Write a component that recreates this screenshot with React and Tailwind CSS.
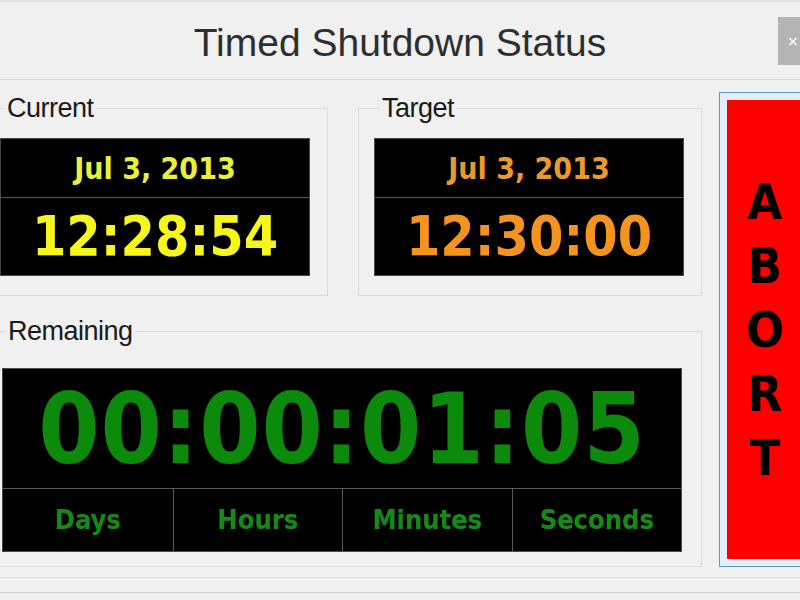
import React from 'react';

const digitFont = "font-['DejaVu_Sans_Condensed','DejaVu_Sans',sans-serif] font-bold";
const uiFont = "font-['Liberation_Sans','Arial',sans-serif]";

const units = ['Days', 'Hours', 'Minutes', 'Seconds'];

// Windows style group box with a caption sitting on the top edge
const GroupBox = ({ label, className, legendClass = 'ml-[5px]', children }) => (
    <fieldset className={`border border-[#d9d9d9] ${className}`}>
        <legend className={`${uiFont} ${legendClass} px-[2px] text-[27px] leading-[28px] tracking-[-0.5px] text-[#1a1a1a]`}>
            {label}
        </legend>
        {children}
    </fieldset>
);

// Black date + clock panel
const ClockPanel = ({ date, time, dateColor, timeColor }) => (
    <div className="w-[310px] h-[138px] bg-black border border-[#4a4a4a] flex flex-col">
        <div className={`${digitFont} h-[58px] flex items-center justify-center text-[30px] ${dateColor}`}>
            {date}
        </div>
        <div className={`${digitFont} flex-1 border-t border-[#5a5a5a] flex items-center justify-center text-[55px] leading-none ${timeColor}`}>
            {time}
        </div>
    </div>
);

export default function App() {
    return (
        <div className="w-[800px] h-[600px] bg-[#f0f0f0] overflow-hidden border-t-[2px] border-[#e2e2e2]">
            {/* Title bar */}
            <div className="h-[78px] grid grid-cols-[1fr_auto_1fr] items-center border-b border-[#dadada]">
                <div />
                <div className={`${uiFont} text-[39px] text-[#2e2e2e] leading-none pt-[4px]`}>
                    Timed Shutdown Status
                </div>
                <div className="flex justify-end self-start pt-[15px]">
                    <div className="w-[22px] h-[48px] bg-[#b4b4b4] flex items-center justify-end pr-[2px] text-white text-[18px] leading-none">
                        ×
                    </div>
                </div>
            </div>

            {/* Body */}
            <div className="flex items-stretch pt-[12px] ml-[-16px] w-[828px]">
                <div className="w-[718px] shrink-0 pt-[2px] flex flex-col gap-[21px]">
                    <div className="flex gap-[30px]">
                        <GroupBox label="Current" className="w-[344px] h-[202px] pl-[15px] pt-[16px]">
                            <ClockPanel
                                date="Jul 3, 2013"
                                time="12:28:54"
                                dateColor="text-[#e8f03a]"
                                timeColor="text-[#f6f61c]"
                            />
                        </GroupBox>
                        <GroupBox label="Target" legendClass="ml-[6px]" className="w-[344px] h-[202px] pl-[15px] pt-[16px]">
                            <ClockPanel
                                date="Jul 3, 2013"
                                time="12:30:00"
                                dateColor="text-[#e99a2c]"
                                timeColor="text-[#f4931e]"
                            />
                        </GroupBox>
                    </div>

                    <GroupBox label="Remaining" legendClass="ml-[4px]" className="w-[718px] h-[250px] pl-[17px] pt-[23px]">
                        <div className="w-[680px] h-[184px] bg-black border border-[#4a4a4a] flex flex-col">
                            <div className={`${digitFont} h-[119px] flex items-center justify-center text-[98px] leading-none tracking-[1px] text-[#0b8a0b]`}>
                                00:00:01:05
                            </div>
                            <div className="flex-1 grid grid-cols-4 border-t border-[#5a5a5a]">
                                {units.map((u, i) => (
                                    <div
                                        key={u}
                                        className={`${digitFont} flex items-center justify-center text-[27px] text-[#168a16] ${i > 0 ? 'border-l border-[#5a5a5a]' : ''}`}
                                    >
                                        {u}
                                    </div>
                                ))}
                            </div>
                        </div>
                    </GroupBox>
                </div>

                {/* Abort button */}
                <div className="ml-[17px] w-[92px] shrink-0 border border-[#5d95c9] bg-[#e3effa] p-[7px] flex">
                    <div className={`flex-1 bg-[#ff0000] flex flex-col items-center justify-center ${digitFont} text-[50px] leading-[64px] text-black`}>
                        {['A', 'B', 'O', 'R', 'T'].map((c) => (
                            <span key={c}>{c}</span>
                        ))}
                    </div>
                </div>
            </div>

            {/* Window frame lines */}
            <div className="mt-[10px] h-[15px] border-t border-[#dcdcdc]" />
            <div className="border-t border-[#d2d2d2]" />
        </div>
    );
}
